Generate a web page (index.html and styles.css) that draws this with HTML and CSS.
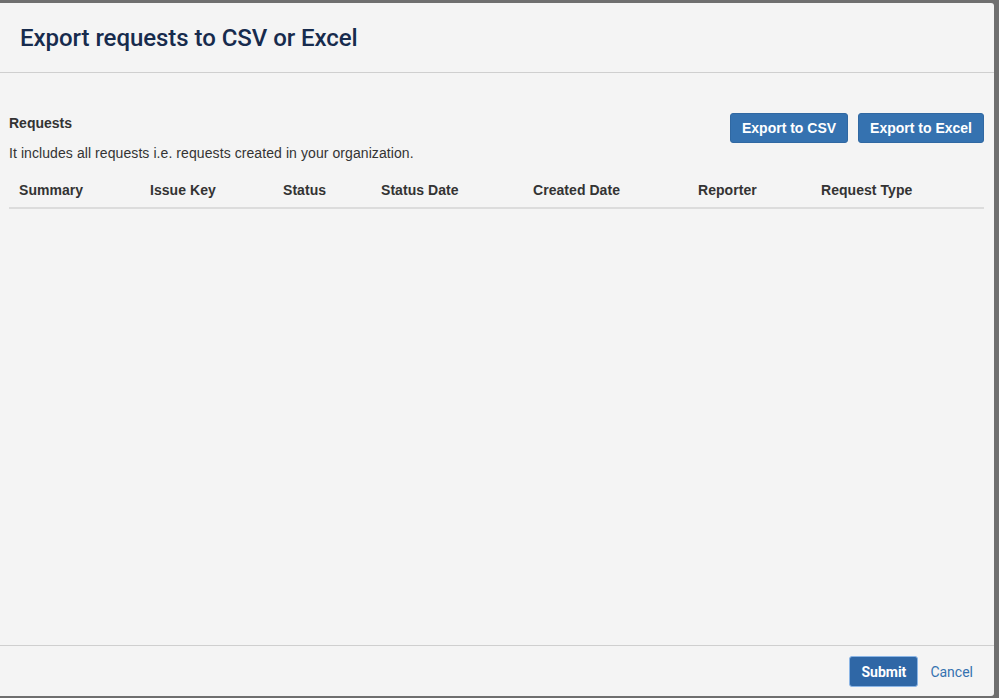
FILE: index.html
```html
<!DOCTYPE html>
<html lang="en">
<head>
    <meta charset="UTF-8">
    <meta name="viewport" content="width=device-width, initial-scale=1.0">
    <title>Export requests</title>
    <link rel="stylesheet" href="styles.css">
</head>
<body>
    <div class="dialog">
        <div class="dialog-header">
            <h2 class="dialog-title">Export requests to CSV or Excel</h2>
        </div>

        <div class="dialog-body">
            <div class="section-head">
                <div class="section-info">
                    <h3 class="section-title">Requests</h3>
                    <p class="section-desc">It includes all requests i.e. requests created in your organization.</p>
                </div>
                <div class="section-actions">
                    <button class="btn btn-primary">Export to CSV</button>
                    <button class="btn btn-primary">Export to Excel</button>
                </div>
            </div>

            <table class="requests">
                <thead>
                    <tr>
                        <th class="col-summary">Summary</th>
                        <th class="col-key">Issue Key</th>
                        <th class="col-status">Status</th>
                        <th class="col-status-date">Status Date</th>
                        <th class="col-created">Created Date</th>
                        <th class="col-reporter">Reporter</th>
                        <th class="col-type">Request Type</th>
                    </tr>
                </thead>
                <tbody></tbody>
            </table>
        </div>

        <div class="dialog-footer">
            <button class="btn btn-submit">Submit</button>
            <a class="cancel" href="#">Cancel</a>
        </div>
    </div>
</body>
</html>
```

FILE: styles.css
```css
html, body{
    margin: 0;
    height: 100%;
}
body{
    background-color: #6f6f6f;
    font-family: "Liberation Sans", Arial, sans-serif;
    font-size: 14px;
    color: #333;
}
.dialog{
    margin-top: 3px;
    width: 994px;
    height: 693px;
    background-color: #f4f4f4;
    border-radius: 0 3px 3px 0;
    display: flex;
    flex-direction: column;
}
.dialog-header{
    height: 69px;
    border-bottom: 1px solid #cfcfcf;
    display: flex;
    align-items: center;
    padding-left: 20px;
}
.dialog-title{
    margin: 0;
    font-family: Roboto, "Liberation Sans", sans-serif;
    font-size: 24px;
    font-weight: 500;
    letter-spacing: -0.05px;
    color: #172b4d;
    padding-top: 1px;
}
.dialog-body{
    flex: 1;
    padding: 40px 10px 0 9px;
}
.section-head{
    display: flex;
    justify-content: space-between;
    align-items: flex-start;
}
.section-title{
    margin: 0;
    font-size: 14px;
    line-height: 20px;
    font-weight: bold;
}
.section-desc{
    margin: 10px 0 0 0;
    line-height: 20px;
    letter-spacing: 0.08px;
}
.section-actions{
    display: flex;
    gap: 10px;
}
.btn{
    border-radius: 3px;
    cursor: pointer;
}
.btn-primary{
    height: 30px;
    padding: 0 11px;
    background-color: #3572b0;
    border: 1px solid #3068a2;
    color: #fff;
    font-family: "Liberation Sans", Arial, sans-serif;
    font-size: 14px;
    font-weight: bold;
}
table.requests{
    width: 100%;
    margin-top: 9px;
    border-collapse: collapse;
}
table.requests th{
    text-align: left;
    padding: 9px 10px 7px 10px;
    line-height: 19px;
    font-weight: bold;
    letter-spacing: 0.05px;
    color: #333;
    border-bottom: 2px solid #dcdcdc;
}
.col-summary{ width: 111px; }
.col-key{ width: 113px; }
.col-status{ width: 78px; }
.col-status-date{ width: 132px; }
.col-created{ width: 145px; }
.col-reporter{ width: 103px; }
.dialog-footer{
    height: 50px;
    border-top: 1px solid #cfcfcf;
    display: flex;
    align-items: center;
    justify-content: flex-end;
    padding-right: 21px;
}
.btn-submit{
    height: 31px;
    width: 69px;
    margin-top: 1px;
    background-color: #2f67a6;
    border: 1px solid #8cb6e6;
    color: #fff;
    font-family: Roboto, "Liberation Sans", sans-serif;
    font-size: 14px;
    font-weight: bold;
}
.cancel{
    margin-left: 12px;
    margin-top: 1px;
    font-family: Roboto, "Liberation Sans", sans-serif;
    font-size: 14px;
    color: #3572b0;
    text-decoration: none;
}
```
